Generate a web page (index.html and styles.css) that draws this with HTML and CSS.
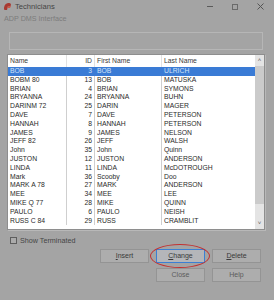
FILE: index.html
```html
<!DOCTYPE html>
<html lang="en">
<head>
  <meta charset="UTF-8">
  <title>Technicians</title>
  <link rel="stylesheet" href="styles.css">
</head>
<body>
<div class="window">
  <div class="titlebar">
    <svg class="app-icon" width="9" height="9" viewBox="0 0 9 9">
      <path d="M1 7 C1 3 3 1 6 1 C8 1 8.5 3 7.5 4 L5 4 L4 8 L1.5 8 Z" fill="#a83a32"/>
      <path d="M5 4 L8 4 L7 6 L4.5 6 Z" fill="#c85a4a"/>
    </svg>
    <span class="title">Technicians</span>
    <div class="controls">
      <span class="ctl-min"></span>
      <span class="ctl-max"></span>
      <svg class="ctl-close" width="7" height="7" viewBox="0 0 7 7">
        <path d="M0.5 0.5 L6.5 6.5 M6.5 0.5 L0.5 6.5" stroke="#555" stroke-width="1"/>
      </svg>
    </div>
  </div>

  <div class="subtitle">ADP DMS Interface</div>

  <div class="groupbox"></div>

  <div class="listview">
    <div class="list-body">
      <div class="row head">
        <div class="c-name">Name</div>
        <div class="c-id">ID</div>
        <div class="c-first">First Name</div>
        <div class="c-last">Last Name</div>
      </div>
      <div class="row selected"><div class="c-name">BOB</div><div class="c-id">3</div><div class="c-first">BOB</div><div class="c-last">ULRICH</div></div>
      <div class="row"><div class="c-name">BOBM 80</div><div class="c-id">13</div><div class="c-first">BOB</div><div class="c-last">MATUSKA</div></div>
      <div class="row"><div class="c-name">BRIAN</div><div class="c-id">4</div><div class="c-first">BRIAN</div><div class="c-last">SYMONS</div></div>
      <div class="row"><div class="c-name">BRYANNA</div><div class="c-id">24</div><div class="c-first">BRYANNA</div><div class="c-last">BUHN</div></div>
      <div class="row"><div class="c-name">DARINM 72</div><div class="c-id">25</div><div class="c-first">DARIN</div><div class="c-last">MAGER</div></div>
      <div class="row"><div class="c-name">DAVE</div><div class="c-id">7</div><div class="c-first">DAVE</div><div class="c-last">PETERSON</div></div>
      <div class="row"><div class="c-name">HANNAH</div><div class="c-id">8</div><div class="c-first">HANNAH</div><div class="c-last">PETERSON</div></div>
      <div class="row"><div class="c-name">JAMES</div><div class="c-id">9</div><div class="c-first">JAMES</div><div class="c-last">NELSON</div></div>
      <div class="row"><div class="c-name">JEFF 82</div><div class="c-id">26</div><div class="c-first">JEFF</div><div class="c-last">WALSH</div></div>
      <div class="row"><div class="c-name">John</div><div class="c-id">35</div><div class="c-first">John</div><div class="c-last">Quinn</div></div>
      <div class="row"><div class="c-name">JUSTON</div><div class="c-id">12</div><div class="c-first">JUSTON</div><div class="c-last">ANDERSON</div></div>
      <div class="row"><div class="c-name">LINDA</div><div class="c-id">11</div><div class="c-first">LINDA</div><div class="c-last">McDOTROUGH</div></div>
      <div class="row"><div class="c-name">Mark</div><div class="c-id">36</div><div class="c-first">Scooby</div><div class="c-last">Doo</div></div>
      <div class="row"><div class="c-name">MARK A 78</div><div class="c-id">27</div><div class="c-first">MARK</div><div class="c-last">ANDERSON</div></div>
      <div class="row"><div class="c-name">MEE</div><div class="c-id">34</div><div class="c-first">MEE</div><div class="c-last">LEE</div></div>
      <div class="row"><div class="c-name">MIKE Q 77</div><div class="c-id">28</div><div class="c-first">MIKE</div><div class="c-last">QUINN</div></div>
      <div class="row"><div class="c-name">PAULO</div><div class="c-id">6</div><div class="c-first">PAULO</div><div class="c-last">NEISH</div></div>
      <div class="row"><div class="c-name">RUSS C 84</div><div class="c-id">29</div><div class="c-first">RUSS</div><div class="c-last">CRAMBLIT</div></div>
    </div>
    <div class="scrollbar">
      <div class="arrow">&#708;</div>
      <div class="thumb"></div>
      <div class="track"></div>
      <div class="arrow">&#709;</div>
    </div>
  </div>

  <label class="check-row">
    <span class="checkbox"></span>
    <span>Show Terminated</span>
  </label>

  <div class="buttons">
    <div class="btn-row">
      <div class="btn"><u>I</u>nsert</div>
      <div class="btn focused"><u>C</u>hange<span class="ring"></span></div>
      <div class="btn"><u>D</u>elete</div>
    </div>
    <div class="btn-row">
      <div class="btn muted">Close</div>
      <div class="btn muted">Help</div>
    </div>
  </div>
</div>
</body>
</html>
```

FILE: styles.css
```css
* {
  margin: 0;
  padding: 0;
  box-sizing: border-box;
}

body {
  width: 274px;
  height: 300px;
  background: #a4a4a4;
  font-family: 'Liberation Sans', Arial, sans-serif;
  color: #333;
  overflow: hidden;
}

.window {
  width: 274px;
  height: 300px;
  display: flex;
  flex-direction: column;
}

/* Barra del titolo */
.titlebar {
  height: 13px;
  display: flex;
  align-items: center;
  padding-left: 3px;
}

.app-icon {
  margin-right: 3px;
}

.title {
  font-size: 7.6px;
  color: #444;
}

.controls {
  margin-left: auto;
  display: flex;
  align-items: center;
  height: 13px;
}

.ctl-min {
  width: 6px;
  height: 1px;
  background: #5a5a5a;
  margin-right: 19px;
}

.ctl-max {
  width: 6px;
  height: 6px;
  border: 1px solid #6a6a6a;
  margin-right: 19px;
}

.ctl-close {
  margin-right: 10px;
}

.subtitle {
  font-size: 7.2px;
  color: #7c7c7c;
  padding: 1px 0 0 4px;
  height: 10px;
}

.groupbox {
  margin: 9px 0 0 9px;
  width: 254px;
  height: 18px;
  border: 1px solid #b6b6b6;
}

/* Lista tecnici */
.listview {
  margin: 4px 0 0 7px;
  width: 258px;
  height: 176px;
  background: #fff;
  border: 1px solid #8e8e8e;
  box-shadow: 1px 1px 0 #b8b8b8;
  display: flex;
}

.list-body {
  flex: 1;
  font-size: 6.8px;
  color: #2a2a2a;
}

.row {
  display: grid;
  grid-template-columns: 59px 28px 67px 92px;
  height: 8.8px;
  line-height: 8.8px;
  white-space: nowrap;
}

.row > div {
  padding: 0 2px;
  overflow: hidden;
}

.row .c-name,
.row .c-id,
.row .c-first {
  border-right: 1px solid #cfcfcf;
}

.row .c-id {
  text-align: right;
}

.row.head {
  height: 12px;
  line-height: 12px;
  color: #3a3a3a;
}

.row.head > div {
  border-right-color: #e2e2e2;
}

.row.selected {
  background: #3a7bd5;
  color: #d2e3f7;
}

.row.selected > div {
  border-right-color: #3a7bd5;
}

.scrollbar {
  width: 9px;
  display: flex;
  flex-direction: column;
  background: #e4e4e4;
}

.arrow {
  height: 11px;
  font-size: 6px;
  line-height: 11px;
  text-align: center;
  color: #555;
}

.thumb {
  height: 138px;
  background: #cbcbcb;
}

.track {
  flex: 1;
}

/* Checkbox */
.check-row {
  display: flex;
  align-items: center;
  gap: 3px;
  margin: 6px 0 0 10px;
  font-size: 7.2px;
  color: #444;
  height: 8px;
}

.checkbox {
  width: 7px;
  height: 7px;
  border: 1px solid #5e5e5e;
  background: #ababab;
}

/* Bottoni */
.buttons {
  margin-top: 5px;
  display: flex;
  flex-direction: column;
  align-items: flex-end;
  gap: 5px;
  padding-right: 13px;
}

.btn-row {
  display: flex;
  gap: 7px;
}

.btn {
  position: relative;
  width: 49px;
  height: 14px;
  border: 1px solid #949494;
  background: #adadad;
  font-size: 7px;
  line-height: 12px;
  text-align: center;
  color: #3a3a3a;
}

.btn u {
  text-decoration-thickness: 0.5px;
}

.btn.focused {
  border-color: #3c7fd3;
  background: #b4b6ba;
}

.btn.muted {
  color: #5c5c5c;
}

.ring {
  position: absolute;
  left: -7px;
  top: -6px;
  width: 60px;
  height: 24px;
  border: 1.5px solid #c33030;
  border-radius: 50%;
}
```
